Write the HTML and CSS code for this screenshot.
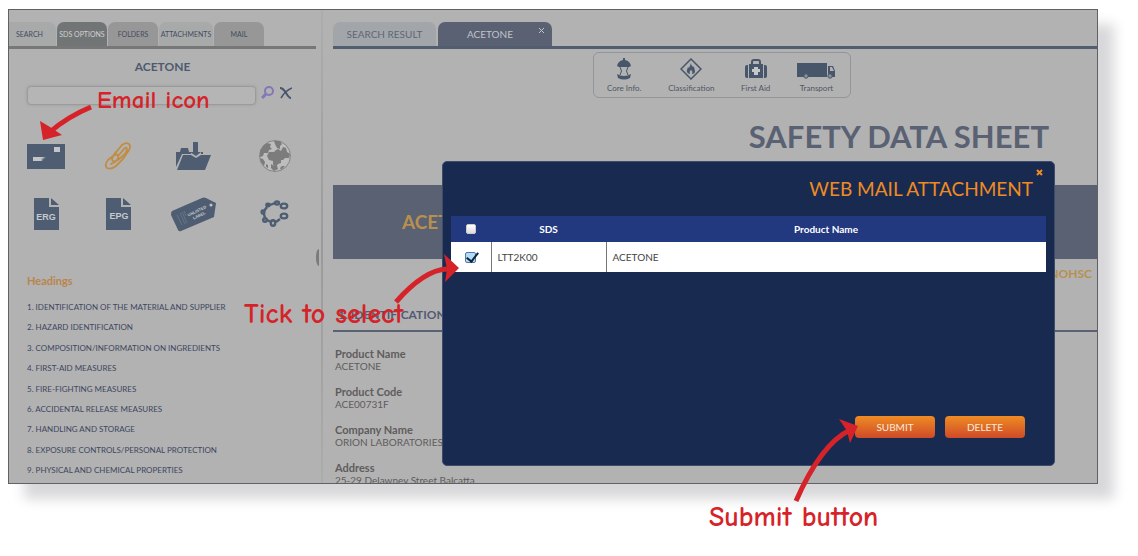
FILE: index.html
```html
<!DOCTYPE html>
<html lang="en">

<head>
    <meta charset="UTF-8">
    <title>Web Mail Attachment</title>
    <link rel="stylesheet" href="styles.css">
</head>

<body>
    <div class="screen">
        <div class="side">
            <div class="tabs side-tabs">
                <button class="light">SEARCH</button>
                <button class="on">SDS OPTIONS</button>
                <button>FOLDERS</button>
                <button class="light">ATTACHMENTS</button>
                <button>MAIL</button>
            </div>
            <h2>ACETONE</h2>
            <div class="search">
                <input type="text" aria-label="Search">
                <button aria-label="Find">
                    <svg width="13" height="14" viewBox="0 0 13 14"><circle cx="8" cy="5" r="4" fill="none" stroke="#8377b8" stroke-width="2"/><path d="M5 8L1 12" stroke="#8377b8" stroke-width="3"/></svg>
                </button>
                <button aria-label="Clear">
                    <svg width="13" height="12" viewBox="0 0 13 12" fill="none" stroke="#47566b"><path d="M1 1Q4 1 7 6T12 11" stroke-width="2"/><path d="M13 1Q6 4 2 11" stroke-width="1.6"/></svg>
                </button>
            </div>
            <div class="icons">
                <button aria-label="Email">
                    <svg width="38" height="25" viewBox="0 0 38 25"><path fill="#4e5d72" d="M0 0h38v25H0z"/><path fill="#c4c5c6" d="M27 3h6v5h-6zM6 13h13l-5 1.5h4L14 16h2l-2 1H6z"/></svg>
                </button>
                <button aria-label="Attach">
                    <svg width="28" height="28" viewBox="0 0 28 28" fill="none" stroke="#c08d43" stroke-width="1.8" stroke-linecap="round"><path d="M14 14L21 6Q23 5 23 8L21 12 14 18Q8 21 8 17Q9 13 13 9L18 3Q22 0 25 2Q27 4 25 8L19 17L12 24Q7 28 3 26Q0 23 4 18L9 14Q13 11 14 14Q15 17 11 20L7 22"/></svg>
                </button>
                <button aria-label="Save to folder">
                    <svg width="35" height="28" viewBox="0 0 35 28" fill="#4e5d72"><path d="M0 25V10h4l1-4h7l1 4h2v2H6zM17 0h5v10h3l-5 4-6-4h3zM25 10h2v2h-2zM7 13h8l5 3 5-3h10l-6 15H1z"/></svg>
                </button>
                <button aria-label="Language">
                    <svg width="32" height="32" viewBox="0 0 32 32"><circle cx="16" cy="16" r="15.5" fill="#bdbdbd" stroke="#858585"/><path fill="#7c7c7c" d="M4 6L8 3 12 4 11 7 13 9 10 10 9 13 5 13 4 16 1 17 1 11zM15 1l6 0 2 3-2 2 0 3-3-1-2-4zM19 9l3 2 2-4 3 1 1 4 3 2-1 4-4 0-2 2-2 0 0 3-3 1-2 3-3-2 0-4-4-1-2-4 2-4 5 0 2-2zM1 18l3 1 2 3-1 4-3-4zM7 24l2 1 0 3-2-1zM12 24l3 2 3 0 1 3-4 2-3-3zM21 28l2-2 3 0-4 4z"/></svg>
                </button>
                <button aria-label="ERG">
                    <svg width="25" height="32" viewBox="0 0 25 32"><path fill="#4e5d72" d="M0 0h15v9h10v23H0zM17 0l8 7h-8z"/><text x="12" y="22" class="doc">ERG</text></svg>
                </button>
                <button aria-label="EPG">
                    <svg width="25" height="32" viewBox="0 0 25 32"><path fill="#4e5d72" d="M0 0h15v9h10v23H0zM17 0l8 7h-8z"/><text x="13" y="21" class="doc">EPG</text></svg>
                </button>
                <button aria-label="Unlisted label">
                    <svg width="46" height="35" viewBox="0 0 46 35"><path fill="#4e5d72" d="M1 14L31 1Q33 0 35 1L45 6 43 20 10 34Q8 35 7 33L0 18Q0 15 1 14z"/><path fill="none" stroke="#6d7a8c" stroke-width=".8" d="M6 18l5 10M9 16l5 11M11 15l5 11M13 14l2 5"/><circle cx="40" cy="8" r="1.6" fill="#c0c2c5"/><g transform="translate(27 16) rotate(-26)"><text class="tag" y="-1">UNLISTED</text><text class="tag" y="4">LABEL</text></g></svg>
                </button>
                <button aria-label="Structure">
                    <svg width="30" height="28" viewBox="0 0 30 28" fill="none" stroke="#4e5d72" stroke-width="2.4"><path d="M10 5L15 3M4 11L7 7M4 14l1 4M7 20l4 2M16 22l4-3"/><g fill="#b2b2b2"><ellipse cx="17" cy="3" rx="2" ry="1.6"/><ellipse cx="8" cy="5" rx="1.6" ry="1.2"/><ellipse cx="24" cy="6" rx="3.2" ry="2.4"/><ellipse cx="3" cy="12" rx="1.4" ry="1.6"/><circle cx="5" cy="20" r="1.8"/><ellipse cx="13" cy="23" rx="2.2" ry="2.8"/><ellipse cx="24" cy="16" rx="3.2" ry="2.4"/></g></svg>
                </button>
            </div>
            <h3>Headings</h3>
            <ul>
                <li><a href="#">1. IDENTIFICATION OF THE MATERIAL AND SUPPLIER</a></li>
                <li><a href="#">2. HAZARD IDENTIFICATION</a></li>
                <li><a href="#">3. COMPOSITION/INFORMATION ON INGREDIENTS</a></li>
                <li><a href="#">4. FIRST-AID MEASURES</a></li>
                <li><a href="#">5. FIRE-FIGHTING MEASURES</a></li>
                <li><a href="#">6. ACCIDENTAL RELEASE MEASURES</a></li>
                <li><a href="#">7. HANDLING AND STORAGE</a></li>
                <li><a href="#">8. EXPOSURE CONTROLS/PERSONAL PROTECTION</a></li>
                <li><a href="#">9. PHYSICAL AND CHEMICAL PROPERTIES</a></li>
            </ul>
        </div>
        <div class="divider"><span class="handle"></span></div>
        <div class="main">
            <div class="tabs main-tabs">
                <button>SEARCH RESULT</button>
                <button class="on">ACETONE
                    <svg class="tab-x" width="7" height="7" viewBox="0 0 7 7" stroke="#c4c6ca"><path d="M1 1l5 5M6 1L1 6"/></svg>
                </button>
            </div>
            <div class="tools">
                <button>
                    <svg width="16" height="22" viewBox="0 0 16 22"><path fill="#47566b" d="M7 0h2v2q5 1 6 6l-2 1H3L1 8q1-5 6-6zM1 16q3 2 7 2t7-2l-1 4q-6 3-12 0z"/><path fill="none" stroke="#47566b" d="M4 9q3 4 0 8M12 9q-3 4 0 8"/></svg>
                    Core Info.
                </button>
                <button>
                    <svg width="22" height="22" viewBox="0 0 22 22"><path d="M11 1l10 10-10 10L1 11z" fill="none" stroke="#47566b" stroke-width="1.5"/><path fill="#47566b" d="M11 5q0 3 3 4l1 4q0 3-3 3 1-3-1-4-2 1-1 4-4-1-3-4l1-3 1 1q1-2 2-5z"/></svg>
                    Classification
                </button>
                <button>
                    <svg width="22" height="22" viewBox="0 0 22 22"><path fill="#47566b" d="M3 7v13H2q-2 0-2-2V9q0-2 2-2zM19 7v13h1q2 0 2-2V9q0-2-2-2zM4 6h14v14H4z"/><path d="M7 6V4q0-2 2-2h4q2 0 2 2v2" fill="none" stroke="#47566b" stroke-width="2"/><path fill="#c6c7c8" d="M9 9h4v2h2v3h-2v3H9v-3H7v-3h2z"/></svg>
                    First Aid
                </button>
                <button>
                    <svg width="39" height="22" viewBox="0 0 39 22"><path fill="#47566b" d="M0 5h30v14H0zM31 8h5l2 5v6h-7z"/><path fill="#b2b2b2" d="M33 9h2l2 4h-4z"/><g fill="#8b929b" stroke="#47566b"><circle cx="9" cy="18" r="2.2"/><circle cx="33" cy="18" r="2.2"/></g></svg>
                    Transport
                </button>
            </div>
            <h1>SAFETY DATA SHEET</h1>
            <div class="banner">ACETONE</div>
            <p class="note">NOHSC</p>
            <h4>1. IDENTIFICATION</h4>
            <dl>
                <dt>Product Name</dt>
                <dd>ACETONE</dd>
                <dt>Product Code</dt>
                <dd>ACE00731F</dd>
                <dt>Company Name</dt>
                <dd>ORION LABORATORIES</dd>
                <dt>Address</dt>
                <dd>25-29 Delawney Street Balcatta</dd>
            </dl>
        </div>
        <div class="modal">
            <button class="close" aria-label="Close">
                <svg width="7" height="7" viewBox="0 0 7 7" stroke="#f08a22" stroke-width="2"><path d="M1 1l5 5M6 1L1 6"/></svg>
            </button>
            <h2>WEB MAIL ATTACHMENT</h2>
            <table>
                <tr>
                    <th class="tick"><input type="checkbox" aria-label="Select all"></th>
                    <th class="sds">SDS</th>
                    <th>Product Name</th>
                </tr>
                <tr>
                    <td class="tick"><input type="checkbox" aria-label="Select LTT2K00" checked></td>
                    <td>LTT2K00</td>
                    <td>ACETONE</td>
                </tr>
            </table>
            <div class="actions">
                <button>SUBMIT</button>
                <button>DELETE</button>
            </div>
        </div>
    </div>
    <svg class="arrows" width="1138" height="556" viewBox="0 0 1138 556">
        <g fill="none" stroke="#d62329" stroke-width="5">
            <path d="M91 107Q67 117 50 132"/>
            <path d="M396 302Q424 270 447 269"/>
            <path d="M796 501Q821 444 850 430"/>
        </g>
        <path fill="#d62329" d="M40 121L50 127 62 135 43 140zM444 254L459 268 445 282 447 269zM839 419L858 426 850 443 847 431z"/>
    </svg>
    <span class="hint hint-email">Email icon</span>
    <span class="hint hint-tick">Tick to select</span>
    <span class="hint hint-submit">Submit button</span>
</body>

</html>
```

FILE: styles.css
```css
* {
    margin: 0;
    padding: 0;
    box-sizing: border-box;
}

body {
    height: 100vh;
    padding: 9px 40px 72px 8px;
    background: #fff;
    font-family: Lato, "Open Sans", sans-serif;
    position: relative;
    overflow: hidden;
}

button {
    border: 0;
    background: none;
    font-family: inherit;
}

svg {
    display: block;
}

.screen {
    height: 100%;
    display: flex;
    position: relative;
    background: #b2b2b2;
    border: 1px solid #606164;
    box-shadow: 16px 15px 12px #d8d8da;
}

.side {
    width: 307px;
    flex: none;
    padding-top: 12px;
    display: flex;
    flex-direction: column;
}

.tabs {
    display: flex;
    height: 27px;
    flex: none;
}

.tabs button {
    border-radius: 7px 7px 0 0;
}

.side-tabs {
    gap: 1px;
    border-bottom: 3px solid #777;
}

.side-tabs button {
    width: 50px;
    font-size: 7px;
    color: #434d60;
    background: #979797;
    white-space: nowrap;
}

.side-tabs .light {
    background: #a8aaaa;
}

.side-tabs .light:first-child {
    width: 47px;
    border-top-left-radius: 0;
    padding-right: 6px;
}

.side-tabs .light:nth-child(4) {
    width: 54px;
}

.side-tabs .on {
    background: #727576;
    color: #d0d0d0;
}

.side h2 {
    margin-top: 9px;
    font-size: 12px;
    line-height: 18px;
    text-align: center;
    color: #4e5a6f;
}

.search {
    display: flex;
    gap: 5px;
    padding: 10px 18px 0;
    height: 30px;
}

.search input {
    width: 229px;
    height: 19px;
    padding: 0 6px;
    background: #b5b5b5;
    border: 1px solid #9b9b9b;
    border-radius: 4px;
    box-shadow: 0 0 3px #999;
}

.search button {
    height: 13px;
}

.icons {
    display: grid;
    grid-template-columns: 74fr 70fr 80fr 82fr;
    grid-template-rows: 58px 58px;
    place-items: center;
    margin-top: 21px;
}

.doc {
    font: bold 9px "Liberation Sans", Arial, sans-serif;
    fill: #c6c9cd;
    text-anchor: middle;
}

.tag {
    font: bold 4px "Liberation Sans", Arial, sans-serif;
    fill: #c6c9cd;
    text-anchor: middle;
}

.side h3 {
    margin: 30px 18px 0;
    font-size: 11px;
    line-height: 16px;
    color: #b8854a;
}

.side ul {
    flex: 1;
    display: flex;
    flex-direction: column;
    justify-content: space-between;
    padding: 12px 18px 7px;
    list-style: none;
}

.side li {
    line-height: 12px;
    font-size: 8px;
}

.side a {
    display: block;
    color: #3d4760;
    text-decoration: none;
    white-space: nowrap;
}

.divider {
    width: 17px;
    flex: none;
    position: relative;
}

.divider::before {
    content: "";
    position: absolute;
    left: 5px;
    top: 0;
    width: 2px;
    height: 100%;
    background: linear-gradient(#adadad, #9a9a9a 50%, #acacac);
}

.handle {
    position: absolute;
    left: 0;
    top: 239px;
    width: 3px;
    height: 17px;
    background: #7b7b7b;
    border-radius: 3px 0 0 3px / 8px 0 0 8px;
}

.main {
    flex: 1;
    min-width: 0;
    padding-top: 12px;
    overflow: hidden;
}

.main-tabs {
    gap: 2px;
    border-bottom: 3px solid #525e70;
}

.main-tabs button {
    width: 103px;
    font-size: 10px;
    color: #5e6676;
    background: #a2a6aa;
    position: relative;
}

.main-tabs .on {
    width: 114px;
    padding-right: 10px;
    background: #596173;
    color: #c0c3c9;
}

.tab-x {
    position: absolute;
    right: 7px;
    top: 5px;
}

.tools {
    width: 258px;
    margin: 3px 0 0 260px;
    padding: 5px 14px 0 13px;
    height: 46px;
    display: flex;
    justify-content: space-between;
    border: 1px solid #929697;
    border-radius: 6px;
}

.tools button {
    display: flex;
    flex-direction: column;
    align-items: center;
    gap: 4px;
    height: 35px;
    font-size: 8px;
    line-height: 9px;
    color: #4f5764;
}

h1 {
    margin: 17px 48px 0 0;
    font-size: 31px;
    line-height: 42px;
    text-align: right;
    color: #596173;
}

.banner {
    height: 74px;
    margin-top: 28px;
    padding-left: 69px;
    background: #596173;
    color: #b8904e;
    font-size: 19px;
    font-weight: bold;
    line-height: 74px;
}

.note {
    margin: 7px 5px 0;
    text-align: right;
    font-size: 12px;
    font-weight: bold;
    line-height: 16px;
    color: #b8904e;
}

.main h4 {
    margin-top: 24px;
    padding-left: 5px;
    font-size: 12px;
    line-height: 18px;
    height: 26px;
    border-bottom: 2px solid #596173;
    color: #535b72;
}

dl {
    padding: 15px 2px 0;
    font-size: 10px;
    line-height: 13px;
    color: #5f5c5c;
}

dt {
    font-size: 11px;
    font-weight: bold;
}

dd {
    margin-bottom: 12px;
}

/* dialog over the sheet */
.modal {
    position: absolute;
    left: 433px;
    right: 42px;
    top: 151px;
    bottom: 17px;
    padding: 7px 8px 27px;
    display: flex;
    flex-direction: column;
    background: #182a50;
    border: 1px solid #3d4c6a;
    border-radius: 5px;
}

.close {
    align-self: flex-end;
    height: 7px;
    margin-right: 3px;
}

.modal h2 {
    margin: 0 13px 14px 0;
    font-size: 19px;
    font-weight: normal;
    line-height: 26px;
    text-align: right;
    color: #f08a22;
}

.modal table {
    width: 100%;
    border-collapse: collapse;
    table-layout: fixed;
    font-size: 10px;
}

.modal th {
    height: 26px;
    background: #22387f;
    color: #fff;
}

.modal td {
    height: 30px;
    padding-left: 6px;
    background: #fff;
    color: #444;
    border-left: 1px solid #777;
}

.modal .tick {
    width: 40px;
    padding: 0;
    border: 0;
    text-align: center;
}

.modal .sds {
    width: 115px;
}

.tick input {
    appearance: none;
    display: block;
    width: 10px;
    height: 10px;
    margin: auto;
    background: linear-gradient(#fff, #ddd);
    border: 1px solid #ccc;
    border-radius: 2px;
}

.tick input:checked {
    width: 11px;
    height: 11px;
    background: #b5dbf6;
    border-color: #5478a6;
    position: relative;
}

.tick input:checked::after {
    content: "";
    position: absolute;
    left: 3px;
    top: -3px;
    width: 5px;
    height: 10px;
    border: solid #10253f;
    border-width: 0 2px 2px 0;
    transform: rotate(38deg);
}

.actions {
    display: flex;
    justify-content: flex-end;
    gap: 10px;
    margin-top: auto;
    padding-right: 21px;
}

.actions button {
    width: 80px;
    height: 22px;
    border-radius: 4px;
    background: linear-gradient(#ef8c23, #cf4a28);
    color: #fbeadb;
    font-size: 10px;
}

/* callouts */
.arrows {
    position: absolute;
    left: 0;
    top: 0;
}

.hint {
    position: absolute;
    color: #d62329;
    font-family: "Comic Neue", Lato, cursive;
    font-size: 28px;
    font-weight: bold;
    line-height: 30px;
    white-space: nowrap;
}

.hint-email {
    left: 97px;
    top: 85px;
    font-size: 25px;
}

.hint-tick {
    left: 244px;
    top: 299px;
}

.hint-submit {
    left: 709px;
    top: 502px;
}
```
